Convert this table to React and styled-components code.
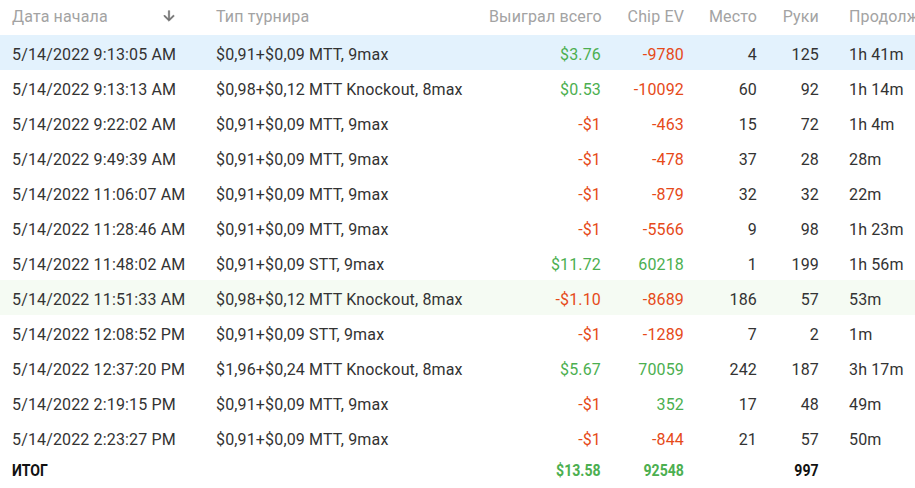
import React from "react";
import styled, { createGlobalStyle } from "styled-components";

const Global = createGlobalStyle`
  html, body { margin: 0; padding: 0; background: #fff; overflow: hidden; }
  body { font-family: Roboto, "Noto Sans", sans-serif; }
  *, *::before, *::after { box-sizing: border-box; }
`;

const Wrap = styled.div`
  width: 915px;
  height: 488px;
  overflow: hidden;
`;

const Table = styled.table`
  border-collapse: collapse;
  table-layout: fixed;
  width: 1060px;
  font-family: Roboto, "Noto Sans", sans-serif;
`;

const HeadCell = styled.th`
  height: 35px;
  padding: 0 12px 3px ${(p) => (p.$last ? "18px" : "12px")};
  font-size: 16px;
  font-weight: 400;
  letter-spacing: 0.15px;
  color: #a3a3a3;
  text-align: ${(p) => (p.$right ? "right" : "left")};
  white-space: nowrap;
  overflow: hidden;
  vertical-align: middle;
`;

const HeadInner = styled.div`
  display: flex;
  align-items: center;
  justify-content: space-between;
  padding-right: 15px;
`;

const Row = styled.tr`
  background: ${(p) => p.$bg || "transparent"};
`;

const Cell = styled.td`
  height: 35px;
  padding: 3px 12px 0 ${(p) => (p.$last ? "18px" : "12px")};
  font-size: 16px;
  letter-spacing: 0.15px;
  color: ${(p) => p.$color || "#333"};
  text-align: ${(p) => (p.$right ? "right" : "left")};
  white-space: nowrap;
  vertical-align: middle;
`;

const FootCell = styled.td`
  height: 33px;
  padding: 0 12px 2px 12px;
  font-size: 16px;
  font-weight: 700;
  color: ${(p) => p.$color || "#111"};
  text-align: ${(p) => (p.$right ? "right" : "left")};
  white-space: nowrap;
  vertical-align: middle;
`;

const Narrow = styled.span`
  display: inline-block;
  transform: scaleX(0.88);
  transform-origin: ${(p) => (p.$right ? "right" : "left")} center;
`;

const GREEN = "#4caf50";
const RED = "#e64a19";

const rows = [
  ["5/14/2022 9:13:05 AM", "$0,91+$0,09 MTT, 9max", "$3.76", "-9780", "4", "125", "1h 41m", "#e3f2fd"],
  ["5/14/2022 9:13:13 AM", "$0,98+$0,12 MTT Knockout, 8max", "$0.53", "-10092", "60", "92", "1h 14m"],
  ["5/14/2022 9:22:02 AM", "$0,91+$0,09 MTT, 9max", "-$1", "-463", "15", "72", "1h 4m"],
  ["5/14/2022 9:49:39 AM", "$0,91+$0,09 MTT, 9max", "-$1", "-478", "37", "28", "28m"],
  ["5/14/2022 11:06:07 AM", "$0,91+$0,09 MTT, 9max", "-$1", "-879", "32", "32", "22m"],
  ["5/14/2022 11:28:46 AM", "$0,91+$0,09 MTT, 9max", "-$1", "-5566", "9", "98", "1h 23m"],
  ["5/14/2022 11:48:02 AM", "$0,91+$0,09 STT, 9max", "$11.72", "60218", "1", "199", "1h 56m"],
  ["5/14/2022 11:51:33 AM", "$0,98+$0,12 MTT Knockout, 8max", "-$1.10", "-8689", "186", "57", "53m", "#f5fbf3"],
  ["5/14/2022 12:08:52 PM", "$0,91+$0,09 STT, 9max", "-$1", "-1289", "7", "2", "1m"],
  ["5/14/2022 12:37:20 PM", "$1,96+$0,24 MTT Knockout, 8max", "$5.67", "70059", "242", "187", "3h 17m"],
  ["5/14/2022 2:19:15 PM", "$0,91+$0,09 MTT, 9max", "-$1", "352", "17", "48", "49m"],
  ["5/14/2022 2:23:27 PM", "$0,91+$0,09 MTT, 9max", "-$1", "-844", "21", "57", "50m"],
];

const colorOf = (v) => (v.startsWith("-") ? RED : GREEN);

const SortIcon = () => (
  <svg width="16" height="16" viewBox="0 0 24 24" fill="#6f6f6f">
    <path d="M20 12l-1.41-1.41L13 16.17V4h-2v12.17l-5.58-5.59L4 12l8 8 8-8z" stroke="#6f6f6f" strokeWidth="0.8" />
  </svg>
);

export default function App() {
  return (
    <Wrap>
      <Global />
      <Table>
        <colgroup>
          <col style={{ width: 204 }} />
          <col style={{ width: 273 }} />
          <col style={{ width: 136 }} />
          <col style={{ width: 83 }} />
          <col style={{ width: 73 }} />
          <col style={{ width: 62 }} />
          <col style={{ width: 229 }} />
        </colgroup>
        <thead>
          <tr>
            <HeadCell>
              <HeadInner>
                <span>Дата начала</span>
                <SortIcon />
              </HeadInner>
            </HeadCell>
            <HeadCell>Тип турнира</HeadCell>
            <HeadCell $right>Выиграл всего</HeadCell>
            <HeadCell $right>Chip EV</HeadCell>
            <HeadCell $right>Место</HeadCell>
            <HeadCell $right>Руки</HeadCell>
            <HeadCell $last>Продолжительность</HeadCell>
          </tr>
        </thead>
        <tbody>
          {rows.map((r, i) => (
            <Row key={i} $bg={r[7]}>
              <Cell>{r[0]}</Cell>
              <Cell>{r[1]}</Cell>
              <Cell $right $color={colorOf(r[2])}>{r[2]}</Cell>
              <Cell $right $color={colorOf(r[3])}>{r[3]}</Cell>
              <Cell $right>{r[4]}</Cell>
              <Cell $right>{r[5]}</Cell>
              <Cell $last>{r[6]}</Cell>
            </Row>
          ))}
        </tbody>
        <tfoot>
          <tr>
            <FootCell><Narrow>ИТОГ</Narrow></FootCell>
            <FootCell />
            <FootCell $right $color={GREEN}><Narrow $right>$13.58</Narrow></FootCell>
            <FootCell $right $color={GREEN}><Narrow $right>92548</Narrow></FootCell>
            <FootCell />
            <FootCell $right><Narrow $right>997</Narrow></FootCell>
            <FootCell />
          </tr>
        </tfoot>
      </Table>
    </Wrap>
  );
}
